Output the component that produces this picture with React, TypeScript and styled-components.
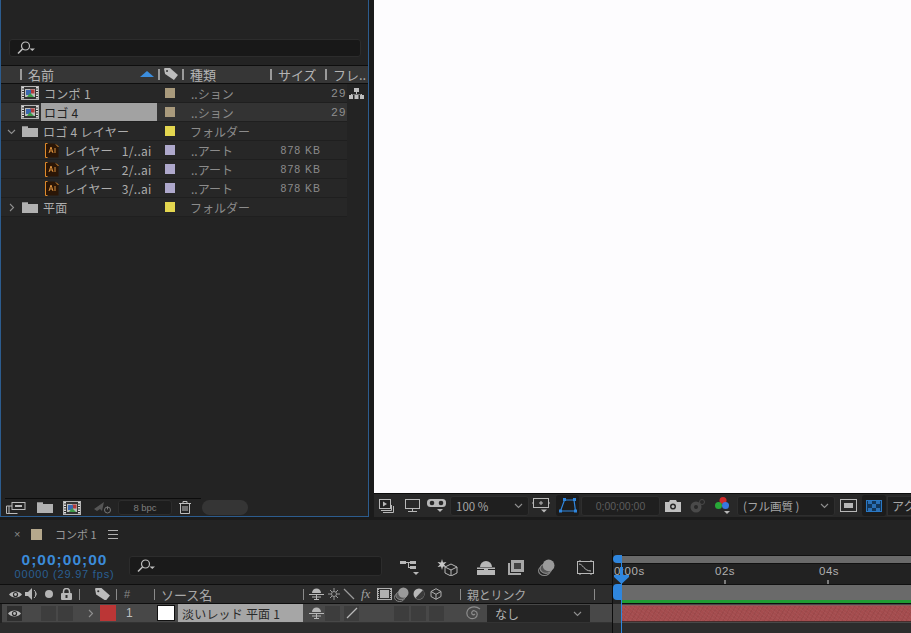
import React from "react";
import styled, { createGlobalStyle } from "styled-components";

const FONT = `"Noto Sans CJK JP", "Noto Sans", sans-serif`;

const Global = createGlobalStyle`
  html, body { margin: 0; padding: 0; background: #1b1b1b; overflow: hidden; }
  * { box-sizing: border-box; }
`;

const Page = styled.div`
  width: 911px; height: 633px; display: flex; flex-direction: column;
  background: #1b1b1b; font-family: ${FONT}; overflow: hidden; color: #b0b0b0;
`;
const TopArea = styled.div`display: flex; height: 517px; flex: none;`;

/* ---------- project panel ---------- */
const ProjectPanel = styled.section`
  width: 369px; height: 517px; flex: none; display: flex; flex-direction: column;
  background: #232323; border: 1px solid #2c5c8e; border-top: 0; border-bottom-width: 1px;
`;
const SearchWrap = styled.div`padding: 39px 7px 8px 8px; flex: none;`;
const SearchBox = styled.div<{ $h: number }>`
  height: ${p => p.$h}px; background: #181818; border: 1px solid #2c2c2c; border-radius: 3px;
  display: flex; align-items: center; padding-left: 6px;
`;
const ProjectHead = styled.div`
  height: 19px; flex: none; display: flex; align-items: center; background: #363636;
  border-top: 1px solid #0e0e0e; border-bottom: 1px solid #0e0e0e;
`;
const HeadCell = styled.div<{ $w: number; $pl?: number }>`
  width: ${p => p.$w}px; flex: none; height: 100%; display: flex; align-items: center;
  padding-left: ${p => p.$pl ?? 0}px; padding-bottom: 1px; font-size: 13px; color: #b4b4b4; white-space: nowrap; overflow: hidden;
`;
const Sep = styled.i<{ $mr?: number }>`width: 2px; height: 11px; background: #9a9a9a; flex: none; margin-right: ${p => p.$mr ?? 6}px;`;
const SortArrow = styled.svg`margin-left: auto; margin-right: 4px; flex: none;`;
const Rows = styled.div`flex: 1; display: flex; flex-direction: column; min-height: 0;`;
const Row = styled.div<{ $sel?: boolean }>`
  height: 19px; flex: none; display: flex; align-items: center; width: 346px;
  background: ${p => (p.$sel ? "#333" : "#272727")}; border-bottom: 1px solid #1f1f1f;
`;
const NameCell = styled.div<{ $indent: number }>`
  width: 156px; flex: none; height: 100%; display: flex; align-items: center; padding-left: ${p => p.$indent}px;
`;
const Twisty = styled.span`display: flex; width: 8px; height: 9px; flex: none; margin-right: 7px; color: #888;`;
const NameText = styled.span<{ $sel?: boolean }>`
  display: flex; align-items: center; height: 18px; flex: 1; padding-left: 3px; margin-left: 2px; font-size: 12px; color: ${p => (p.$sel ? "#222" : "#aeaeae")};
  background: ${p => (p.$sel ? "#a2a2a2" : "transparent")}; white-space: pre; letter-spacing: .3px;
`;
const LabelCell = styled.div`width: 26px; flex: none; display: flex; justify-content: center;`;
const Swatch = styled.i<{ $c: string; $s?: number }>`
  display: block; width: ${p => p.$s ?? 10}px; height: ${p => p.$s ?? 10}px; background: ${p => p.$c}; flex: none;
`;
const TypeCell = styled.div<{ $full?: boolean }>`
  width: 86px; flex: none; padding-left: ${p => (p.$full ? 7 : 8)}px; font-size: 12px; color: #8c8c8c; white-space: nowrap;
`;
const SizeCell = styled.div`
  width: 52px; flex: none; text-align: right; font-size: 10.5px; letter-spacing: 1px; color: #8c8c8c; font-family: "Liberation Sans", sans-serif;
`;
const FrameCell = styled.div`
  flex: 1; text-align: right; padding-right: 0; font-size: 11.5px; letter-spacing: 1.5px; color: #909090; font-family: "Liberation Sans", sans-serif;
`;
const FlowWrap = styled.div`height: 19px; display: flex; align-items: center; padding-left: 2px;`;
const RowWithExtra = styled.div`display: flex; align-items: flex-start; flex: none;`;
const ProjectFooter = styled.div`
  height: 17px; flex: none; display: flex; align-items: center; padding-left: 5px; position: relative;
`;
const FootLine = styled.i`position: absolute; left: 4px; top: -1px; width: 196px; height: 1px; background: #0c0c0c;`;
const FootSlot = styled.div<{ $w: number; $pl?: number }>`width: ${p => p.$w}px; padding-left: ${p => p.$pl ?? 0}px; flex: none; display: flex; align-items: center;`;
const BpcBox = styled.div`
  width: 54px; height: 15px; flex: none; border: 1px solid #2c2c2c; background: #1d1d1d; border-radius: 3px;
  font-size: 9.5px; color: #7e7e7e; display: flex; align-items: center; justify-content: center; font-family: "Liberation Sans", sans-serif;
`;
const Pill = styled.div`width: 46px; height: 15px; border-radius: 8px; background: #353535; flex: none;`;

/* ---------- viewer ---------- */
const Viewer = styled.section`flex: 1; display: flex; flex-direction: column; margin-left: 5px; min-width: 0;`;
const Canvas = styled.div`flex: 1; background: #fdfcfe; border-bottom: 1px solid #0c0c0c;`;
const ViewerBar = styled.div`
  height: 23px; flex: none; background: #282828; display: flex; align-items: center; padding-left: 5px; overflow: hidden; white-space: nowrap;
`;
const ToolSlot = styled.div<{ $w: number; $on?: boolean; $ml?: number }>`
  width: ${p => p.$w}px; height: 21px; flex: none; display: flex; align-items: center; justify-content: center; margin-left: ${p => p.$ml ?? 0}px;
  background: ${p => (p.$on ? "#1c1c1c" : "transparent")}; border-radius: 3px;
`;
const DropBox = styled.div<{ $w: number; $ml?: number }>`
  width: ${p => p.$w}px; height: 20px; flex: none; background: #1f1f1f; border: 1px solid #2e2e2e; border-radius: 3px; margin-left: ${p => p.$ml ?? 0}px;
  display: flex; align-items: center; padding: 0 5px; font-size: 11.5px; color: #a6a6a6; justify-content: space-between;
`;
const TimeBox = styled(DropBox)`color: #5d5d5d; font-family: "Liberation Sans", sans-serif; font-size: 10.5px; justify-content: center;`;
const Clip = styled.div`font-size: 12px; color: #a6a6a6; padding-left: 4px; margin-left: 1px; height: 20px; display: flex; align-items: center; border: 1px solid #2e2e2e; border-right: 0; background: #1f1f1f; flex: 1;`;

/* ---------- timeline ---------- */
const Timeline = styled.section`flex: 1; display: flex; flex-direction: column; background: #232323; margin-top: 3px; min-height: 0;`;
const TabBar = styled.div`
  height: 30px; flex: none; display: flex; align-items: center; padding: 0 0 2px 14px; font-size: 11px; color: #9a9a9a;
`;
const CloseX = styled.span`font-size: 11px; color: #8a8a8a; width: 17px; font-family: "Liberation Sans", sans-serif;`;
const TabName = styled.span`margin-left: 13px; white-space: pre;`;
const BurgerWrap = styled.span`display: flex; margin-left: 11px;`;
const Split = styled.div`flex: 1; display: flex; min-height: 0; position: relative;`;
const LeftCol = styled.div`width: 613px; flex: none; display: flex; flex-direction: column; border-right: 1px solid #0c0c0c;`;
const Controls = styled.div`height: 34px; flex: none; display: flex; align-items: flex-start;`;
const Clock = styled.div`width: 129px; flex: none; display: flex; flex-direction: column; align-items: center; padding-top: 2px;`;
const Code = styled.div`font: bold 15.5px/16px "Liberation Sans", sans-serif; color: #3b8bd9; letter-spacing: 1px;`;
const Fps = styled.div`font: 11px/12px "Liberation Sans", sans-serif; color: #2a5f92; letter-spacing: .8px;`;
const TlSearch = styled(SearchBox)`width: 253px; margin-top: 6px; flex: none; background: #1a1a1a;`;
const CtrlIcons = styled.div`display: flex; align-items: center; padding-top: 9px; padding-left: 18px;`;
const CtrlSlot = styled.div<{ $w: number }>`width: ${p => p.$w}px; flex: none; display: flex;`;
const LayerHead = styled.div`
  height: 20px; flex: none; display: flex; align-items: center; background: #2d2d2d;
  border-top: 1px solid #0e0e0e; border-bottom: 1px solid #0e0e0e; font-size: 13px; color: #a8a8a8; padding-left: 9px;
`;
const Cell = styled.div<{ $w: number; $ml?: number }>`
  width: ${p => p.$w}px; margin-left: ${p => p.$ml ?? 0}px; flex: none; display: flex; align-items: center; white-space: nowrap;
`;
const TinySep = styled.i`display: block; width: 1px; height: 11px; background: #8a8a8a; flex: none;`;
const Hash = styled.span`font: 11px "Liberation Sans", sans-serif; color: #888;`;
const ParentHead = styled.span`font-size: 12px; letter-spacing: -.2px;`;
const FxText = styled.i`font: italic 13px "Liberation Serif", serif; color: #a0a0a0;`;
const LayerRow = styled.div`height: 19px; flex: none; display: flex; align-items: center; background: #484848; margin-left: 2px; padding-left: 5px; border-bottom: 1px solid #333;`;
const Square = styled.i<{ $dark?: boolean }>`
  display: flex; align-items: center; justify-content: center; width: 15px; height: 15px; flex: none; background: ${p => (p.$dark ? "#2f2f2f" : "#3d3d3d")};
`;
const LayerNum = styled.span`font: 12px "Liberation Sans", sans-serif; color: #c0c0c0;`;
const WhiteBox = styled.i`display: block; width: 18px; height: 16px; background: #fff; border: 1px solid #111; flex: none;`;
const LayerName = styled.div`
  width: 125px; height: 18px; flex: none; background: #a6a6a6; color: #2a2a2a; font-size: 12px; display: flex; align-items: center; padding-left: 4px; letter-spacing: .2px; white-space: pre;
`;
const ParentBox = styled.div`
  width: 103px; height: 17px; flex: none; background: #242424; color: #b4b4b4; font-size: 12px; display: flex; align-items: center; justify-content: space-between; padding: 0 8px;
`;
const LeftRest = styled.div`flex: 1; background: #2c2c2c;`;
const RightCol = styled.div`flex: 1; display: flex; flex-direction: column; min-width: 0; margin-top: 5px;`;
const NavTrack = styled.div`height: 9px; flex: none; background: #6a6a6a; border-top: 1px solid #111; border-bottom: 1px solid #111; margin-left: 8px;`;
const Ruler = styled.div`height: 20px; flex: none; display: flex; padding-left: 1px; background: #222; position: relative; font: 11.5px/15px "Liberation Sans", sans-serif; color: #b0b0b0;`;
const RulerMark = styled.div<{ $w: number }>`width: ${p => p.$w}px; flex: none; letter-spacing: .5px;`;
const Tick = styled.i<{ $x: number }>`display: block; width: 2px; height: 4px; background: #7c7c7c; position: absolute; bottom: 0; left: ${p => p.$x}px;`;
const WorkBar = styled.div`height: 16px; flex: none; background: #6a6a6a; border-top: 1px solid #111; margin-left: 8px;`;
const GreenLine = styled.div`height: 4px; flex: none; background: #1f9c33; border-bottom: 1px solid #0e0e0e; margin-left: 8px;`;
const ClipRow = styled.div`height: 19px; flex: none; background: #484848; padding: 1px 0 0 8px;`;
const ClipBar = styled.div`
  height: 17px; background: #a44c4e; border-bottom: 1px solid #4a2b2b; border-top: 1px solid #8c5a5a;
  background-image:
    repeating-linear-gradient(37deg, rgba(255,255,255,.035) 0 1px, transparent 1px 3px),
    repeating-linear-gradient(-61deg, rgba(0,0,0,.05) 0 1px, transparent 1px 4px);
`;
const RightRest = styled.div`flex: 1; background: #2c2c2c;`;
const Playhead = styled.i`position: absolute; left: 621px; top: 13px; bottom: 0; width: 1px; background: #2e86de;`;
const PlayKnob = styled.svg`position: absolute; left: 614px; top: 17px;`;
const NavHandle = styled.i`position: absolute; left: 613px; top: 5px; width: 9px; height: 8px; background: #2f86de; border-radius: 5px 0 0 5px;`;
const WorkHandle = styled.i`position: absolute; left: 613px; top: 34px; width: 8px; height: 16px; background: #2f86de; border-radius: 4px 0 0 4px;`;

/* ---------- icons ---------- */
const Loupe = () => (
  <svg width="20" height="14" viewBox="0 0 20 14" fill="none" stroke="#bdbdbd" strokeWidth="1.2">
    <circle cx="9.500" cy="5" r="4" /><path d="M6.500 8 2 12.500" strokeWidth="1.6" /><path d="M13.500 7.500h5.500l-2.700 2.400z" fill="#bdbdbd" stroke="none" />
  </svg>
);
const CompIcon = () => (
  <svg width="18" height="14" viewBox="0 0 18 14" style={{ flex: "none" }}>
    <rect x=".5" y=".5" width="17" height="13" fill="#333" stroke="#b5b5b5" />
    <path d="M2 1v12M16 1v12" stroke="#ddd" strokeWidth="2" strokeDasharray="1.5 1" />
    <rect x="4" y="3" width="10" height="8" fill="#bcbcbc" />
    <rect x="9" y="3.500" width="4.500" height="4" fill="#b23b3b" />
    <rect x="5" y="4" width="5" height="5" fill="#3a68b0" />
    <path d="M6 11l3-4 4 4z" fill="#3c9a46" />
  </svg>
);
const FolderIcon = () => (
  <svg width="16" height="11" viewBox="0 0 16 11" style={{ flex: "none" }}>
    <path d="M0 1h6v1h10v9H0z" fill="#b1b1b1" /><path d="M0 0h6v1H0z" fill="#8a8a8a" />
  </svg>
);
const AiIcon = () => (
  <svg width="14" height="15" viewBox="0 0 14 15" style={{ flex: "none" }}>
    <path d="M.5.5h9l4 3.500v10.500H.5z" fill="#2b1606" />
    <path d="M.5 14.500V.5h2M11 1.500l2.500 2.500M.5 14.500h2" stroke="#e08a2a" fill="none" />
    <path d="M4 10l2-6 2 6M5 8h2M10 5v5" stroke="#d98f3c" fill="none" strokeWidth="1" />
  </svg>
);
const Flow = () => (
  <svg width="15" height="11" viewBox="0 0 15 11" fill="#bdbdbd">
    <path d="M5 0h5v4H5zM0 7h4v4H0zM5.500 7h4v4h-4zM11 7h4v4h-4z" /><path d="M7 4h1v2h5v1h-1V6.500H3V7H2V6h5z" />
  </svg>
);
const CompFlow = () => (
  <svg width="19" height="15" viewBox="0 0 19 15" fill="#b8b8b8">
    <path d="M0 1h6v3H0zM10 1h6v3h-6zM10 6h6v3h-6zM6 2h4v1H6zM8 2h1v6H8zM8 7h2v1H8z" /><path d="M13 12h6l-3 3z" />
  </svg>
);
const Chevron = ({ dir = "down" }: { dir?: "down" | "right" }) => (
  <svg width="9" height="9" viewBox="0 0 9 9" fill="none" stroke="currentColor" strokeWidth="1.1" style={{ color: "#909090", flex: "none" }}>
    {dir === "down" ? <path d="M1 3l3.500 3.500L8 3" /> : <path d="M3 1l3.500 3.500L3 8" />}
  </svg>
);
const NewComp = () => (
  <svg width="20" height="12" viewBox="0 0 20 12" fill="none" stroke="#bcbcbc">
    <rect x="6" y=".5" width="13" height="7" /><rect x="9" y="3" width="7" height="2" fill="#bcbcbc" stroke="none" />
    <path d="M.5 4v7.500h11M.5 4H6M3 4v7" />
  </svg>
);
const Rocket = () => (
  <svg width="20" height="15" viewBox="0 0 20 15" fill="none">
    <path d="M1 9 11 2l-2 9-2-2-3 2z" fill="#555" /><circle cx="14.500" cy="10" r="3" stroke="#777" /><path d="M14.500 6.500v3" stroke="#777" />
  </svg>
);
const Trash = () => (
  <svg width="12" height="13" viewBox="0 0 12 13" fill="none" stroke="#bdbdbd">
    <path d="M0 2.500h12M4 2.500V.5h4v2M1.500 2.500v10h9v-10M4 5v5M6 5v5M8 5v5" />
  </svg>
);
const Eye = ({ c = "#b8b8b8" }: { c?: string }) => (
  <svg width="13" height="9" viewBox="0 0 13 9">
    <path d="M0 4.500C3 .5 10 .5 13 4.500 10 8.500 3 8.500 0 4.500z" fill={c} /><circle cx="6.500" cy="4.500" r="2.600" fill="#2a2a2a" /><circle cx="6.500" cy="4.500" r="1.400" fill={c} />
  </svg>
);
const Speaker = () => (
  <svg width="14" height="12" viewBox="0 0 14 12" fill="none">
    <path d="M0 4h3l4-4v12L3 8H0z" fill="#b8b8b8" /><path d="M9 2a5 5 0 0 1 0 8M10 4a2.500 2.500 0 0 1 0 4" stroke="#b8b8b8" />
  </svg>
);
const Dot = () => <svg width="8" height="8" viewBox="0 0 8 8"><circle cx="4" cy="4" r="4" fill="#b4b4b4" /></svg>;
const Lock = () => (
  <svg width="11" height="12" viewBox="0 0 11 12">
    <path d="M2.500 5V3.500a3 3 0 0 1 6 0V5" fill="none" stroke="#b8b8b8" strokeWidth="1.500" /><rect y="5" width="11" height="7" rx="1" fill="#b8b8b8" /><rect x="4.500" y="7" width="2" height="3" fill="#2d2d2d" />
  </svg>
);
const Tag = ({ w = 14 }: { w?: number }) => (
  <svg width={w} height={w * 0.85} viewBox="0 0 14 12">
    <path d="M0 1a1 1 0 0 1 1-1h5l8 7-4 5-9-6z" fill="#bcbcbc" /><circle cx="3" cy="3" r="1" fill="#333" />
  </svg>
);
const Shy = ({ c = "#b8b8b8" }: { c?: string }) => (
  <svg width="15" height="12" viewBox="0 0 15 12" fill="none" stroke={c}>
    <path d="M3 5a4.500 4.500 0 0 1 9 0z" fill={c} stroke="none" /><path d="M0 6.500h15M7.500 6.500V11M5 11.500h5M3 9h9" />
  </svg>
);
const Hat = () => (
  <svg width="18" height="14" viewBox="0 0 18 14" fill="#b8b8b8">
    <path d="M3 6a6 6 0 0 1 12 0z" /><rect x="0" y="6.500" width="18" height="1.500" /><path d="M0 9h7V8h4v1h7v5H0z" />
  </svg>
);
const Gear = () => (
  <svg width="12" height="12" viewBox="0 0 12 12" fill="none" stroke="#9a9a9a">
    <circle cx="6" cy="6" r="2.500" /><path d="M6 0v3M6 9v3M0 6h3M9 6h3M2 2l2 2M8 8l2 2M10 2 8 4M4 8l-2 2" />
  </svg>
);
const Slash = ({ c = "#9a9a9a", flip }: { c?: string; flip?: boolean }) => (
  <svg width="12" height="12" viewBox="0 0 12 12"><path d={flip ? "M1 11 11 1" : "M1 1l10 10"} stroke={c} strokeWidth="1.300" /></svg>
);
const Film = () => (
  <svg width="15" height="12" viewBox="0 0 15 12">
    <rect x=".5" y=".5" width="14" height="11" fill="none" stroke="#b0b0b0" /><rect x="3" y="2" width="9" height="8" fill="#b0b0b0" /><path d="M1.500 1v10M13.500 1v10" stroke="#b0b0b0" strokeDasharray="1 1" />
  </svg>
);
const Discs = ({ s = 15 }: { s?: number }) => (
  <svg width={s} height={s} viewBox="0 0 16 16">
    <ellipse cx="6" cy="11" rx="5.500" ry="4.500" fill="none" stroke="#8a8a8a" /><ellipse cx="7.500" cy="9" rx="5.500" ry="4.500" fill="#555" stroke="#8a8a8a" /><circle cx="10" cy="6" r="5.500" fill="#9a9a9a" />
  </svg>
);
const Half = () => (
  <svg width="12" height="12" viewBox="0 0 12 12"><circle cx="6" cy="6" r="5.500" fill="#b8b8b8" /><path d="M10 2a5.500 5.500 0 0 1-7.500 8z" fill="#3a3a3a" /></svg>
);
const Cube = ({ s = 12 }: { s?: number }) => (
  <svg width={s} height={s} viewBox="0 0 12 12" fill="none" stroke="#b0b0b0"><path d="M6 .7 11 3.500v5L6 11.300 1 8.500v-5zM1 3.500 6 6.300l5-2.800M6 6.300v5" /></svg>
);
const Star3D = () => (
  <svg width="21" height="17" viewBox="0 0 21 17">
    <path d="M5 0l1 3.500L9.500 3 7 5.500l2.500 2.500-3.500-.5L5 11l-1-3.500L.5 8 3 5.500.5 3 4 3.500z" fill="#c8c8c8" />
    <path d="M14 5l6 3v6l-6 3-6-3V8zM8 8l6 3 6-3M14 11v6" fill="none" stroke="#b8b8b8" />
  </svg>
);
const Film2 = () => (
  <svg width="16" height="15" viewBox="0 0 16 15" fill="#a8a8a8"><path d="M3 0h13v12H3z" /><path d="M0 3h2v10h11v2H0z" /><path d="M6 3h7v6H6z" fill="#444" /></svg>
);
const Graph = () => (
  <svg width="19" height="15" viewBox="0 0 19 15" fill="none" stroke="#b8b8b8">
    <rect x="1.500" y="1.500" width="16" height="12" /><path d="M3 4c4 0 5 7 12 7" /><path d="M4 0v2M15 0v2M4 13v2M15 13v2" />
  </svg>
);
const Layers = () => (
  <svg width="15" height="14" viewBox="0 0 15 14" fill="none" stroke="#b8b8b8"><path d="M4 13.500h10.500V7" /><path d="M2 11.500h10.500V6" /><rect x=".5" y=".5" width="11" height="9" fill="#222" /><path d="M4 2.500v5l4-2.500z" fill="#b8b8b8" stroke="none" /></svg>
);
const Monitor = () => (
  <svg width="15" height="13" viewBox="0 0 15 13" fill="none" stroke="#b8b8b8"><rect x=".5" y=".5" width="14" height="9" /><path d="M7.500 10v2M3 12.500h9" /></svg>
);
const Mask = () => (
  <svg width="19" height="14" viewBox="0 0 19 14" fill="#b8b8b8">
    <rect width="19" height="8" rx="3.500" /><circle cx="5" cy="4" r="2.300" fill="#282828" /><circle cx="14" cy="4" r="2.300" fill="#282828" /><path d="M10 10h6l-3 3z" />
  </svg>
);
const Safe = () => (
  <svg width="18" height="15" viewBox="0 0 18 15" fill="none" stroke="#b8b8b8"><rect x="1.500" y=".5" width="15" height="9" /><path d="M9 3v4M7 5h4M1.500 5H0M18 5h-1.500" /><path d="M9 11.500h6l-3 3z" fill="#b8b8b8" stroke="none" /></svg>
);
const Region = () => (
  <svg width="18" height="15" viewBox="0 0 18 15" fill="none" stroke="#2f86de" strokeWidth="1.200">
    <path d="M5.500 2h9.500l1.500 11H1.500z" />
    <rect x="4" y="0" width="3" height="3" fill="#2f86de" stroke="none" /><rect x="14" y="0" width="3" height="3" fill="#2f86de" stroke="none" />
    <rect x="0" y="11.500" width="3" height="3" fill="#2f86de" stroke="none" /><rect x="15" y="11.500" width="3" height="3" fill="#2f86de" stroke="none" />
  </svg>
);
const Camera = () => (
  <svg width="16" height="12" viewBox="0 0 16 12"><path d="M0 2h4l1-2h6l1 2h4v10H0z" fill="#c0c0c0" /><circle cx="8" cy="6.500" r="3" fill="#282828" /><circle cx="8" cy="6.500" r="1.500" fill="#c0c0c0" /></svg>
);
const Snapshot = () => (
  <svg width="16" height="14" viewBox="0 0 16 14"><circle cx="6" cy="8" r="5.500" fill="#4a4a4a" /><circle cx="6" cy="8" r="2" fill="#282828" /><circle cx="12" cy="3" r="2.500" fill="none" stroke="#4a4a4a" /></svg>
);
const Rgb = () => (
  <svg width="17" height="17" viewBox="0 0 17 17"><circle cx="8" cy="3.500" r="3.500" fill="#d02a2a" /><circle cx="3.500" cy="8.500" r="3.500" fill="#28a838" /><circle cx="10.500" cy="8.500" r="3.500" fill="#3878e0" /><path d="M9 14h6l-3 3z" fill="#b8b8b8" /></svg>
);
const BoxIcon = () => (
  <svg width="17" height="13" viewBox="0 0 17 13" fill="none" stroke="#b8b8b8"><rect x=".5" y=".5" width="16" height="12" /><rect x="4" y="4" width="9" height="5" fill="#b8b8b8" stroke="none" /></svg>
);
const Checker = () => (
  <svg width="16" height="12" viewBox="0 0 16 12">
    <rect width="16" height="12" fill="#12365a" />
    <path d="M2 1h4v3H2zM10 1h4v3h-4zM6 4h4v4H6zM2 8h4v3H2zM10 8h4v3h-4z" fill="#2a6fb5" />
    <rect x=".5" y=".5" width="15" height="11" fill="none" stroke="#2a78c4" />
  </svg>
);
const Spiral = () => (
  <svg width="15" height="14" viewBox="0 0 15 14" fill="none" stroke="#8c8c8c" strokeWidth="1.200"><path d="M14 3C9-1 2 1 1 6c-1 5 4 8 8 6 3-2 3-6 0-7-2-1-4 1-3 3 1 1 2 1 3 0" /></svg>
);
const Bars = () => (
  <svg width="10" height="9" viewBox="0 0 10 9" fill="#b0b0b0"><path d="M0 0h10v1H0zM0 4h10v1H0zM0 8h10v1H0z" /></svg>
);

type RowData = { name: string; indent: number; icon: "comp" | "folder" | "ai"; color: string; type: string; full?: boolean; size?: string; frame?: string; twisty?: "down" | "right"; sel?: boolean };
const rows: RowData[] = [
  { name: "コンポ 1", indent: 20, icon: "comp", color: "#a99a7c", type: "..ション", frame: "29" },
  { name: "ロゴ 4", indent: 20, icon: "comp", color: "#a99a7c", type: "..ション", frame: "29", sel: true },
  { name: "ロゴ 4 レイヤー", indent: 6, icon: "folder", color: "#e3d64f", type: "フォルダー", full: true, twisty: "down" },
  { name: "レイヤー   1/..ai", indent: 44, icon: "ai", color: "#aea8cc", type: "..アート", size: "878 KB" },
  { name: "レイヤー   2/..ai", indent: 44, icon: "ai", color: "#aea8cc", type: "..アート", size: "878 KB" },
  { name: "レイヤー   3/..ai", indent: 44, icon: "ai", color: "#aea8cc", type: "..アート", size: "878 KB" },
  { name: "平面", indent: 6, icon: "folder", color: "#e3d64f", type: "フォルダー", full: true, twisty: "right" },
];

const App: React.FC = () => (
  <Page>
    <Global />
    <TopArea>
      <ProjectPanel>
        <SearchWrap>
          <SearchBox $h={18}><Loupe /></SearchBox>
        </SearchWrap>
        <ProjectHead>
          <HeadCell $w={157} $pl={19}>
            <Sep />名前
            <SortArrow width="14" height="6" viewBox="0 0 14 6"><path d="M0 6 7 0l7 6z" fill="#3c8ede" /></SortArrow>
          </HeadCell>
          <HeadCell $w={24}><Sep $mr={4} /><Tag /></HeadCell>
          <HeadCell $w={88}><Sep />種類</HeadCell>
          <HeadCell $w={55}><Sep />サイズ</HeadCell>
          <HeadCell $w={42}><Sep />フレ..</HeadCell>
        </ProjectHead>
        <Rows>
          {rows.map((r, i) => (
            <RowWithExtra key={r.name}>
              <Row $sel={r.sel}>
                <NameCell $indent={r.indent}>
                  {r.twisty && <Twisty><Chevron dir={r.twisty} /></Twisty>}
                  {r.icon === "comp" ? <CompIcon /> : r.icon === "folder" ? <FolderIcon /> : <AiIcon />}
                  <NameText $sel={r.sel}>{r.name}</NameText>
                </NameCell>
                <LabelCell><Swatch $c={r.color} /></LabelCell>
                <TypeCell $full={r.full}>{r.type}</TypeCell>
                <SizeCell>{r.size}</SizeCell>
                <FrameCell>{r.frame}</FrameCell>
              </Row>
              {i === 0 && <FlowWrap><Flow /></FlowWrap>}
            </RowWithExtra>
          ))}
        </Rows>
        <ProjectFooter>
          <FootLine />
          <FootSlot $w={31}><NewComp /></FootSlot>
          <FootSlot $w={26}><FolderIcon /></FootSlot>
          <FootSlot $w={30}><CompIcon /></FootSlot>
          <FootSlot $w={25}><Rocket /></FootSlot>
          <BpcBox>8 bpc</BpcBox>
          <FootSlot $w={30} $pl={7}><Trash /></FootSlot>
          <Pill />
        </ProjectFooter>
      </ProjectPanel>
      <Viewer>
        <Canvas />
        <ViewerBar>
          <ToolSlot $w={15}><Layers /></ToolSlot>
          <ToolSlot $w={36}><Monitor /></ToolSlot>
          <ToolSlot $w={19} $ml={-3}><Mask /></ToolSlot>
          <DropBox $w={79} $ml={4}>100 %<Chevron /></DropBox>
          <ToolSlot $w={24}><Safe /></ToolSlot>
          <ToolSlot $w={23} $ml={3} $on><Region /></ToolSlot>
          <TimeBox $w={79} $ml={2}>0;00;00;00</TimeBox>
          <ToolSlot $w={25}><Camera /></ToolSlot>
          <ToolSlot $w={25}><Snapshot /></ToolSlot>
          <ToolSlot $w={27}><Rgb /></ToolSlot>
          <DropBox $w={98}>(フル画質 )<Chevron /></DropBox>
          <ToolSlot $w={26}><BoxIcon /></ToolSlot>
          <ToolSlot $w={24} $ml={1} $on><Checker /></ToolSlot>
          <Clip>アク</Clip>
        </ViewerBar>
      </Viewer>
    </TopArea>
    <Timeline>
      <TabBar>
        <CloseX>×</CloseX>
        <Swatch $c="#b5a88c" $s={11} />
        <TabName>コンポ 1</TabName>
        <BurgerWrap><Bars /></BurgerWrap>
      </TabBar>
      <Split>
        <LeftCol>
          <Controls>
            <Clock>
              <Code>0;00;00;00</Code>
              <Fps>00000 (29.97 fps)</Fps>
            </Clock>
            <TlSearch $h={20}><Loupe /></TlSearch>
            <CtrlIcons>
              <CtrlSlot $w={37}><CompFlow /></CtrlSlot>
              <CtrlSlot $w={40}><Star3D /></CtrlSlot>
              <CtrlSlot $w={31}><Hat /></CtrlSlot>
              <CtrlSlot $w={30}><Film2 /></CtrlSlot>
              <CtrlSlot $w={38}><Discs s={17} /></CtrlSlot>
              <CtrlSlot $w={20}><Graph /></CtrlSlot>
            </CtrlIcons>
          </Controls>
          <LayerHead>
            <Cell $w={16}><Eye /></Cell>
            <Cell $w={20}><Speaker /></Cell>
            <Cell $w={16}><Dot /></Cell>
            <Cell $w={18}><Lock /></Cell>
            <Cell $w={16}><TinySep /></Cell>
            <Cell $w={21}><Tag w={15} /></Cell>
            <Cell $w={8}><TinySep /></Cell>
            <Cell $w={30}><Hash>#</Hash></Cell>
            <Cell $w={7}><TinySep /></Cell>
            <Cell $w={142}>ソース名</Cell>
            <Cell $w={6}><TinySep /></Cell>
            <Cell $w={19}><Shy /></Cell>
            <Cell $w={15}><Gear /></Cell>
            <Cell $w={18}><Slash /></Cell>
            <Cell $w={16}><FxText>fx</FxText></Cell>
            <Cell $w={17}><Film /></Cell>
            <Cell $w={19}><Discs /></Cell>
            <Cell $w={17}><Half /></Cell>
            <Cell $w={30}><Cube /></Cell>
            <Cell $w={7}><TinySep /></Cell>
            <Cell $w={127}><ParentHead>親とリンク</ParentHead></Cell>
            <TinySep />
          </LayerHead>
          <LayerRow>
            <Cell $w={34}><Square $dark><Eye /></Square></Cell>
            <Cell $w={17}><Square /></Cell>
            <Cell $w={28}><Square /></Cell>
            <Cell $w={14}><Chevron dir="right" /></Cell>
            <Cell $w={26}><Swatch $c="#bb3636" $s={16} /></Cell>
            <Cell $w={31}><LayerNum>1</LayerNum></Cell>
            <Cell $w={21}><WhiteBox /></Cell>
            <LayerName>淡いレッド 平面 1</LayerName>
            <Cell $w={16} $ml={6}><Shy /></Cell>
            <Cell $w={19}><Square /></Cell>
            <Cell $w={50}><Square><Slash c="#bbb" flip /></Square></Cell>
            <Cell $w={17}><Square /></Cell>
            <Cell $w={18}><Square /></Cell>
            <Cell $w={37}><Square /></Cell>
            <Cell $w={21}><Spiral /></Cell>
            <ParentBox>なし<Chevron /></ParentBox>
          </LayerRow>
          <LeftRest />
        </LeftCol>
        <RightCol>
          <NavTrack />
          <Ruler>
            <RulerMark $w={101}>0:00s</RulerMark>
            <Tick $x={111} />
            <RulerMark $w={104}>02s</RulerMark>
            <Tick $x={214} />
            <RulerMark $w={80}>04s</RulerMark>
          </Ruler>
          <WorkBar />
          <GreenLine />
          <ClipRow><ClipBar /></ClipRow>
          <RightRest />
        </RightCol>
        <NavHandle />
        <WorkHandle />
        <Playhead />
        <PlayKnob width="15" height="17" viewBox="0 0 15 17"><path d="M6 0h3v8h6v2l-7.500 7L0 10V8h6z" fill="#2f86de" /></PlayKnob>
      </Split>
    </Timeline>
  </Page>
);

export default App;
